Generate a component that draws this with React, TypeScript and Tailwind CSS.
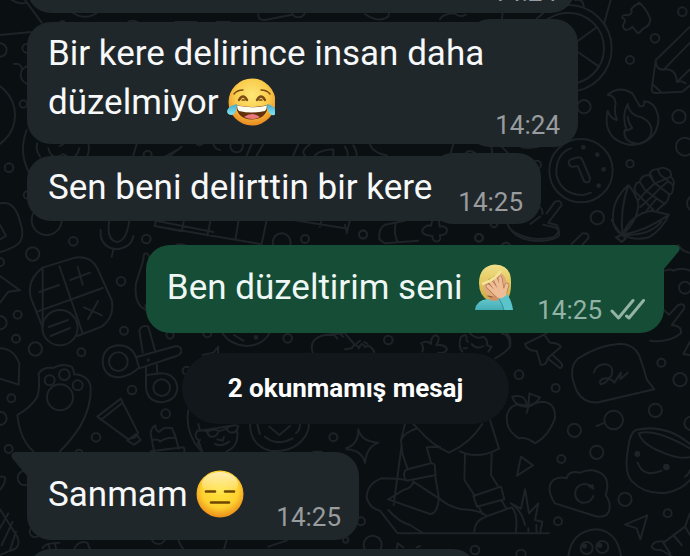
import React from "react";
import clsx from "clsx";

type Dot = [number, number, number];

const dotsTopLeft: Dot[] = [
  [0, 150, 20], [80, 145, 13], [27, 503, 13], [70, 312, 11], [82, 585, 11],
  [90, 225, 28], [710, 438, 19], [443, 464, 12], [895, 30, 22], [-60, 345, 105],
  [255, -12, 62], [140, 660, 45],
];

const dotsTopRight: Dot[] = [
  [1012, 35, 13], [930, 115, 13], [855, 180, 12], [717, 320, 20], [1002, 350, 20],
  [1020, 440, 27], [855, 491, 11], [757, 653, 20], [402, 713, 11], [54, 703, 12],
  [576, 494, 12], [1050, 610, 24], [670, 145, 130], [670, 145, 107], [708, 512, 95],
];

const dotsBottomLeft: Dot[] = [
  [220, 64, 13], [98, 102, 20], [439, 57, 13], [0, 127, 12], [363, 184, 13],
  [53, 284, 12], [0, 308, 20], [48, 356, 12], [106, 387, 20], [372, 332, 12],
  [244, 397, 12], [34, 535, 12], [0, 595, 20], [396, 510, 13], [497, 581, 13],
  [288, 652, 13], [26, 687, 12], [75, 774, 22], [845, 67, 27], [915, 57, 12],
  [863, 355, 13], [1000, 652, 12], [510, 345, 11], [622, 340, 12], [560, 452, 12],
  [180, 323, 53], [355, 425, 28], [485, 503, 25], [180, 532, 39], [149, 481, 15],
  [193, 464, 16], [233, 496, 15], [105, 935, 16], [237, 700, 11], [475, 950, 22],
];

const dotsBottomRight: Dot[] = [
  [402, 54, 12], [54, 44, 12], [1020, 203, 18], [130, 360, 13], [522, 464, 13],
  [632, 504, 12], [949, 428, 12], [1005, 479, 20], [931, 571, 20], [806, 600, 28],
  [688, 631, 20], [1038, 610, 20], [755, 697, 20], [649, 717, 12], [840, 838, 20],
  [968, 880, 12], [639, 904, 12], [48, 904, 12], [83, 974, 27], [528, 1003, 14],
  [390, 990, 13], [725, 984, 18], [772, 981, 18], [2, 960, 8], [447, 12, 10],
];

const Dots: React.FC<{ items: Dot[] }> = ({ items }) => (
  <>
    {items.map(([cx, cy, r]) => (
      <circle key={`${cx}-${cy}-${r}`} cx={cx} cy={cy} r={r} />
    ))}
  </>
);

const Wallpaper: React.FC = () => (
  <svg
    aria-hidden="true"
    className="absolute inset-0 h-full w-full"
    viewBox="0 0 2070 1668"
    preserveAspectRatio="xMinYMin slice"
    fill="none"
    stroke="#1d2326"
    strokeWidth="6"
    strokeLinecap="round"
    strokeLinejoin="round"
  >
    <g>
      <Dots items={dotsTopLeft} />
      <path d="M75 0 125 68M0 105 92 96M35 0Q60 15 80 8M42 192Q62 187 66 208M80 390Q55 455 86 515" />
      <path d="M775 42Q773 62 795 60L875 44M385 66Q400 58 415 68M525 66H590M650 66H690M180 66Q190 60 195 68" />
      <path d="M112 430Q105 450 120 470M265 430Q270 450 262 468M145 445Q155 485 190 462Q225 490 238 445M180 438 190 432M410 432 400 466M495 470 530 450M545 440 510 468M590 432Q600 440 608 430M640 432Q645 448 660 450M755 432 740 466M790 432 770 466M895 432 880 466M930 432Q900 455 915 466M1000 466V448Q960 450 945 466" />
      {/* umbrella */}
      <path d="M0 610Q45 600 60 665Q78 715 50 735Q30 748 0 756M0 675 18 708 0 718" />
    </g>

    <g transform="translate(1035 0)">
      <Dots items={dotsTopRight} />
      <path d="M700 122 752 84M690 150 762 200M797 0 777 72M690 0Q715 -5 716 20M60 42Q100 70 130 50L132 40M285 58Q290 42 330 40Q345 55 362 44M473 40 470 60" />
      {/* puzzle piece */}
      <path d="M882 8Q878 14 868 18L858 28Q866 40 848 46Q830 42 832 54Q845 58 838 68Q828 82 842 90Q858 88 862 80L878 100Q886 98 894 86Q916 78 916 56Q900 20 882 8Z" />
      {/* pencil */}
      <path d="M1035 80 932 181 920 268Q921 280 934 279L1012 275 1035 256M932 181Q932 210 956 209Q992 202 996 246Q1008 240 1022 250M956 209 1035 128M996 246 1035 208M922 252 950 278" />
      {/* flame */}
      <path d="M788 284Q825 255 862 280Q874 300 884 318Q900 322 898 304Q932 306 940 352Q942 405 895 428Q850 446 808 415Q776 385 788 332Q796 356 816 360Q806 335 812 310Q810 286 788 284Z" />
      <path d="M848 312Q828 350 846 392L862 384Q850 370 848 350M848 312Q852 345 890 352Q926 370 918 402Q912 424 880 432Q838 428 838 396Q838 386 846 392" />
      {/* clock */}
      <path d="M678 445Q632 460 634 525Q650 585 715 585L738 578M672 492Q668 482 678 478L700 472Q710 472 713 482L735 534Q736 548 724 547Q716 545 714 536L698 498 684 500Q674 500 672 492Z" />
      <g fill="#1d2326" stroke="none">
        <circle cx="715" cy="442" r="7" />
        <circle cx="757" cy="464" r="7" />
        <circle cx="776" cy="508" r="7" />
        <circle cx="761" cy="557" r="7" />
      </g>
      {/* corn */}
      <path d="M850 556Q800 600 804 660Q805 690 832 704Q880 660 880 610Q870 575 850 556ZM850 556Q825 625 832 704M832 704Q860 640 920 632L972 644Q950 690 912 712Q870 724 832 704ZM832 704Q900 695 972 644M816 712 832 704 842 716 830 726Z" />
      <path d="M870 575Q865 550 884 545Q890 525 912 525Q920 505 940 508Q952 498 968 508Q980 512 978 530Q992 545 984 560Q985 582 972 585Q970 608 950 618L935 632M884 545 900 570 935 595 960 612M912 525 930 550 972 582M940 508Q940 525 960 535L984 555M880 600 905 572 930 550 978 530M885 622 920 590 950 560 968 545M905 632 935 595M918 525 925 545M870 575 900 605 925 630" />
      {/* hand */}
      <path d="M585 622Q595 630 592 642M605 640 630 605Q648 598 650 615L610 668 635 675Q650 695 625 712Q570 725 525 705Q490 690 488 672M556 672 585 650" />
      <path d="M435 435Q445 450 440 462M470 440 490 460M530 442Q560 448 595 436M325 432 315 466M362 462Q368 445 392 460M0 440Q10 455 8 466M25 436Q35 450 35 466M75 434Q85 460 125 466" />
    </g>

    <g transform="translate(0 660)">
      <Dots items={dotsBottomLeft} />
      {/* microphone */}
      <path d="M328 0Q318 60 350 66Q380 64 388 0M302 30V48Q310 84 350 88Q395 82 400 48M340 90 335 110" />
      <path d="M468 0 464 18 545 34M468 2 640 36M464 18 780 72M552 0 545 34M632 0 622 46M716 0 706 60M800 0 785 72M880 0 1035 25M965 0 960 20" />
      <path d="M530 74Q545 70 556 76M438 100Q430 98 430 120L408 190Q400 250 436 270M438 100Q450 102 450 130" />
      {/* plane */}
      <path d="M0 168 60 211 25 215 0 248" />
      {/* calculator */}
      <path d="M128 143 225 113Q272 106 292 145L335 240Q345 290 305 320L232 348M128 322 92 232Q80 180 128 143ZM178 138 248 340M112 275 308 204M118 216 177 195M211 180 270 158M233 141 248 194M252 262 306 286M294 243 264 298M146 321 204 300M152 348 210 324" />
      {/* scissors */}
      <path d="M408 412Q395 376 355 376Q308 380 308 427Q312 472 360 472Q395 465 418 442M408 412 528 378Q545 378 544 396Q540 405 530 408L418 445ZM428 398 418 332Q425 312 445 320L466 395M438 440V500Q440 545 485 547Q532 540 532 500Q525 462 485 460L440 465M470 428 472 460M418 445 408 412" />
      <circle cx="445" cy="420" r="2" />
      <path d="M0 385Q40 385 58 430L56 494 0 476M436 256 440 275" />
      {/* paw */}
      <path d="M100 694Q60 660 52 585Q95 560 112 530Q120 505 116 460Q130 440 160 444Q185 428 215 440Q222 450 222 463Q265 465 272 500Q275 560 240 620Q210 665 180 694" />
      {/* paint tube */}
      <path d="M292 590 362 536 414 638Q410 658 382 656L292 590ZM302 600 368 548M382 662 408 642 422 660 402 674Z" />
      {/* birthday cake */}
      <path d="M462 694 452 640Q455 620 466 616Q465 630 478 636Q490 618 516 625L526 648 536 686M458 660Q475 655 480 665Q500 650 528 654M452 694 550 682Q556 685 552 696M565 570Q555 620 585 670L605 694" />
      <path d="M606 694 595 660Q580 650 592 632 610 628 620 634M595 612 600 632 690 618M600 660Q588 670 600 676M622 636Q636 625 656 632Q650 652 634 650Q624 648 622 636ZM680 625Q696 612 715 618Q712 638 695 638Q682 636 680 625ZM656 634 680 626M652 658 668 662 672 650M645 672Q665 682 688 665M712 635Q716 680 680 694" />
      <path d="M750 612Q750 675 810 692Q880 700 915 650Q928 630 926 612M772 612Q775 630 780 642M795 650Q830 680 878 655M808 620 838 645 870 618M900 612Q900 630 888 640" />
      <path d="M608 405 640 398 655 380 654 398M668 340Q690 375 740 378Q790 375 808 340M702 345 730 362M938 398Q925 355 975 345L1035 338M1000 342 1012 356M1018 340 1030 350" />
      <circle cx="768" cy="352" r="4" fill="#1d2326" />
      {/* party hat */}
      <path d="M0 770Q25 765 10 795L0 810M0 868 52 950Q65 985 30 992L0 1005M25 880 0 925M38 905 5 975M48 935 30 990M128 985Q130 970 178 968M145 972 150 988M165 970 168 988M222 988Q235 960 262 968L270 988M535 960Q540 975 550 988M680 960 672 988M805 980 860 962M940 695H965" />
    </g>

    <g transform="translate(1035 660)">
      <Dots items={dotsBottomRight} />
      <path d="M103 58Q100 25 120 14L180 2M103 58 120 70 220 62M152 10Q145 40 158 66M235 25Q225 40 245 45L262 48Q262 66 278 64Q290 60 284 46Q308 45 306 28Q300 16 284 20L282 0M235 25Q250 12 258 18L262 0M0 14 5 35M15 0 5 40" />
      <path d="M488 14Q505 50 550 60Q600 70 640 50Q648 30 630 22L595 14M680 72 712 40Q735 38 730 54L712 74M800 0Q815 30 832 44M950 5Q910 50 832 44M812 52 830 44 842 54 830 66ZM470 74Q485 62 495 74M1000 75Q1010 95 1035 98M960 152Q975 145 985 152Q1010 140 1035 152" />
      {/* hand at the edge */}
      <path d="M957 270 972 284 1000 255Q1020 248 1018 265L980 315Q1012 318 1008 340Q970 370 915 362" />
      <path d="M0 340 30 375M0 388 20 385Q30 365 42 385Q50 360 60 382Q75 370 88 396M35 370 45 362M58 366 68 372M232 395Q238 378 228 370Q245 360 258 372Q258 345 275 346Q288 352 274 376Q300 372 306 388Q300 402 280 398M352 395Q338 380 348 350L362 345M365 350Q362 365 370 365M356 385 366 385M375 340Q395 360 415 350Q430 360 425 375 435 380 440 380L430 395M380 372Q395 390 415 378M470 340Q495 345 495 380Q480 400 450 415M485 340Q500 350 495 380" />
      {/* push pin */}
      <path d="M605 340 540 372Q545 392 575 393L588 435Q605 435 608 415L648 380Q640 368 615 368L598 345M608 415 645 445Q658 440 645 425L622 404" />
      {/* speech balloon */}
      <path d="M700 415Q760 375 825 371Q865 372 882 405Q895 440 905 478L928 508 760 547Q715 550 695 512Q665 445 700 415ZM746 458Q755 430 785 433Q808 440 800 465Q780 495 766 492Q760 480 780 475Q800 475 808 488L828 458 826 478 848 458" />
      {/* apple */}
      <path d="M548 560Q500 540 486 585Q480 630 522 655Q545 650 570 670Q610 650 630 595Q632 545 590 545Q565 548 548 560ZM545 578 550 560M545 560Q510 560 502 530Q545 520 545 560ZM550 560 553 520 585 532Q570 555 550 560" />
      <path d="M755 618 780 608" />
      {/* star */}
      <path d="M40 628Q48 665 100 668Q65 680 60 728Q50 690 4 688M4 684Q40 675 40 628" />
      {/* walking person */}
      <path d="M180 612 168 660 172 700 188 748M170 675 146 855M168 660Q180 635 218 625L205 612M218 625Q260 675 312 698Q375 670 412 612M435 600 462 686Q400 720 345 694M360 705 358 780 390 828M440 702 438 765 460 800M245 682 258 728M285 680 245 682M188 748 258 730Q272 728 270 748L272 765 185 782Q172 770 180 752ZM270 765 282 835Q275 885 255 882L130 838M190 782Q160 775 110 775Q65 790 65 835Q75 865 105 872Q130 905 158 940H612M130 870Q160 905 195 915L235 940M205 785Q200 805 175 810L130 838M205 785 282 835Q310 860 350 868 400 870 422 885M385 828 468 800 478 838 396 860ZM400 858 412 882M470 842 484 865M388 940Q385 905 422 890L500 862Q520 880 512 940" />
      {/* grass */}
      <path d="M540 915Q530 870 498 850L528 866 540 808 552 880 580 850 570 900 592 905 585 940M550 940V925M575 940 574 915" />
      <path d="M528 710 564 736 516 767Z" />
      {/* cloud */}
      <path d="M630 850Q600 805 625 780Q645 768 665 775Q670 750 705 758Q745 740 775 765Q795 785 782 825Q805 860 785 885Q765 895 740 885ZM742 800Q715 782 694 805Q682 835 710 848Q738 850 745 828M732 798 745 806 742 795" />
      {/* cup */}
      <path d="M850 680Q856 638 872 630Q960 610 1035 672M882 640Q890 675 960 700Q1005 718 1035 712M882 640Q930 625 1035 685M850 680Q835 760 862 785Q900 825 965 818Q1010 810 1035 780M878 728Q895 775 950 752M1020 770Q1030 765 1035 750" />
      <g fill="#1d2326" stroke="none">
        <circle cx="877" cy="702" r="9" />
        <circle cx="964" cy="741" r="10" />
        <circle cx="718" cy="978" r="8" />
        <circle cx="764" cy="976" r="8" />
      </g>
      <path d="M907 886 840 914 875 925 886 958Z" />
      <path d="M670 1008Q680 935 750 928Q815 930 828 1008M1035 880 1020 920 960 965Q925 960 920 980 925 992 948 990L980 1008M955 968 975 1000M985 945 1010 975M1020 920 1035 945M1035 365 1015 402 1035 405M155 985 158 970 175 982M215 982 225 978" />
    </g>
  </svg>
);

const JoyEmoji: React.FC = () => (
  <svg role="img" aria-label="😂" viewBox="0 0 48 48" className="inline-block h-12 w-12 align-[-12px]">
    <defs>
      <radialGradient id="joyFace" cx="50%" cy="36%" r="64%">
        <stop offset="0" stopColor="#fde777" />
        <stop offset=".55" stopColor="#f9cc4c" />
        <stop offset="1" stopColor="#e98a1f" />
      </radialGradient>
      <linearGradient id="joyTear" x1="0" y1="0" x2="0" y2="1">
        <stop offset="0" stopColor="#4aa9c8" />
        <stop offset="1" stopColor="#7ee6f5" />
      </linearGradient>
    </defs>
    <circle cx="25" cy="24" r="23.5" fill="url(#joyFace)" />
    <g fill="none" stroke="#7a4a14" strokeLinecap="round">
      <path d="M7 16Q10 12 16 12M34 12Q40 12 43 16" strokeWidth="1.4" />
      <path d="M12 22Q16 15 20 22M30 22Q34 15 38 22" strokeWidth="2.4" />
      <path d="M15 22H18M32 22H35" strokeWidth="1.3" />
    </g>
    <path d="M9 27Q25 31 41 27Q40 41 25 41.5Q10 41 9 27Z" fill="#61300d" />
    <path d="M10 27.5Q25 31 40 27.5Q40 31 38 33Q25 36 12 33Q10 31 10 27.5Z" fill="#fffdf1" />
    <path d="M17 39Q25 33 33 39Q25 43 17 39Z" fill="#e9787a" />
    <path d="M10 26Q1 28 0 33Q0 37 5 37Q10 35 10 26Z" fill="url(#joyTear)" />
    <path d="M40 26Q48 28 49 33Q49 38 45 37Q40 35 40 26Z" fill="url(#joyTear)" />
  </svg>
);

const FacepalmEmoji: React.FC = () => (
  <svg role="img" aria-label="🤦🏼‍♀️" viewBox="0 0 48 48" className="inline-block h-12 w-12 align-[-12px]">
    <defs>
      <linearGradient id="palmHair" x1="0" y1="0" x2="0" y2="1">
        <stop offset="0" stopColor="#f0e08a" />
        <stop offset=".5" stopColor="#e3c75d" />
        <stop offset="1" stopColor="#c9a548" />
      </linearGradient>
      <linearGradient id="palmShirt" x1="0" y1="0" x2="0" y2="1">
        <stop offset="0" stopColor="#62c6cb" />
        <stop offset="1" stopColor="#45acb5" />
      </linearGradient>
    </defs>
    <path d="M8 20Q8 3 24 1.5Q41 2 40 21Q40 31 37 35L32 38H18Q8 33 8 20Z" fill="url(#palmHair)" />
    <path d="M13 21Q24 17 30 10Q36 14 36 23Q35 33 25 37Q13 34 13 21Z" fill="#e0aa7d" />
    <path d="M18 33H29V39H18Z" fill="#cf9265" />
    <path d="M4 47Q5 37 17 36Q23 40 30 36L38 40 42 47Z" fill="url(#palmShirt)" />
    <path d="M16 22 19 20M17 33 21 34" fill="none" stroke="#8d5731" strokeWidth="1.2" strokeLinecap="round" />
    {/* fingers first, the palm and sleeve over them */}
    <g strokeLinecap="round" fill="none">
      <path d="M17 23 25 31M19 18 27 29M24 15 29 27M29 15 31 27M36 22 33 31" stroke="#ad744c" strokeWidth="4.6" />
      <path d="M17 23 25 31M19 18 27 29M24 15 29 27M29 15 31 27M36 22 33 31" stroke="#eebd95" strokeWidth="3.4" />
    </g>
    <path d="M25 27Q30 23 35 27L36 34Q31 38 26 34Q22 31 25 27Z" fill="#eebd95" />
    <path d="M27 35Q33 36 36 31Q41 38 42 47H33Q32 40 27 35Z" fill="#5bc3ca" />
    <path d="M28 36Q31 40 33 47" fill="none" stroke="#31909a" strokeWidth="1" />
    <path d="M11 21Q24 17 30 8" fill="none" stroke="#f2e495" strokeWidth="2.6" />
  </svg>
);

const ExpressionlessEmoji: React.FC = () => (
  <svg role="img" aria-label="😑" viewBox="0 0 48 48" className="inline-block h-12 w-12 align-[-12px]">
    <defs>
      <radialGradient id="flatFace" cx="50%" cy="40%" r="60%">
        <stop offset="0" stopColor="#ffe53c" />
        <stop offset=".65" stopColor="#fdd130" />
        <stop offset="1" stopColor="#ed8d19" />
      </radialGradient>
      <linearGradient id="flatShine" x1="0" y1="0" x2="0" y2="1">
        <stop offset="0" stopColor="#fff2c8" stopOpacity=".85" />
        <stop offset="1" stopColor="#fff2c8" stopOpacity="0" />
      </linearGradient>
    </defs>
    <circle cx="24" cy="24" r="23.5" fill="url(#flatFace)" />
    <ellipse cx="24" cy="14" rx="18" ry="12" fill="url(#flatShine)" />
    <path d="M10 21.5H19M29 21.5H38M15 32.5H33" stroke="#6d4605" strokeWidth="2.6" strokeLinecap="round" />
  </svg>
);

const DoubleCheck: React.FC = () => (
  <svg
    role="img"
    aria-label="İletildi"
    viewBox="0 0 36 24"
    className="h-6 w-9"
    fill="none"
    stroke="#93b3a5"
    strokeWidth="3"
    strokeLinecap="round"
    strokeLinejoin="round"
  >
    <path d="M2 13 8.5 20 23 2.500M16.500 18 19 20 33.500 2.500" />
  </svg>
);

interface BubbleProps {
  children?: React.ReactNode;
  time: string;
  own?: boolean;
  tail?: boolean;
  lobe?: boolean;
  className?: string;
  textClassName?: string;
}

const Bubble: React.FC<BubbleProps> = ({
  children,
  time,
  own = false,
  tail = false,
  lobe = false,
  className,
  textClassName,
}) => (
  <article
    className={clsx(
      "relative flex items-end justify-between rounded-[24px]",
      own
        ? "self-end bg-[#154d37] text-[#eef7f3]"
        : "self-start bg-[#20272a] text-[#f6f8f9]",
      tail && own && "rounded-tr-none",
      tail && !own && "rounded-tl-none",
      className,
    )}
  >
    {tail && (
      <svg
        aria-hidden="true"
        viewBox="0 0 16 24"
        className={clsx(
          "absolute top-0 h-6 w-4",
          own ? "left-full fill-[#154d37]" : "right-full -scale-x-100 fill-[#20272a]",
        )}
      >
        <path d="M0 0H12Q17 1 15 6L0 24Z" />
      </svg>
    )}
    {lobe && (
      <span className="absolute -inset-y-[3px] right-0 w-28 rounded-[24px] bg-[#20272a]" />
    )}
    <p className={clsx("relative text-[35px] leading-[49px]", textClassName)}>{children}</p>
    <div
      className={clsx(
        "relative flex shrink-0 items-center gap-2 text-[26px] leading-[30px]",
        own ? "text-[#93b3a5]" : "text-[#989c9e]",
        tail ? "pb-2" : "pb-1",
      )}
    >
      <time>{time}</time>
      {own && <DoubleCheck />}
    </div>
  </article>
);

const App: React.FC = () => {
  return (
    <div className="relative min-h-screen w-full overflow-hidden bg-[#0a0f12] font-[Roboto,sans-serif]">
      <Wallpaper />
      <main className="relative flex h-screen flex-col pl-[27px] pr-[26px]">
        {/* previous message, scrolled almost out of view */}
        <Bubble
          time="14:24"
          className="-mt-[60px] h-[73px] w-[548px] shrink-0 pr-[18px] pb-0.5"
          textClassName="pt-[7px]"
        />
        <Bubble
          time="14:24"
          lobe
          className="mt-[9px] w-[551px] pl-[21px] pr-[18px]"
          textClassName="pt-[7px] pb-[17px]"
        >
          Bir kere delirince insan daha
          <br />
          düzelmiyor <JoyEmoji />
        </Bubble>
        <Bubble
          time="14:25"
          lobe
          className="mt-3 gap-[26px] pl-[21px] pr-[18px]"
          textClassName="pt-[7px] pb-[9px]"
        >
          Sen beni delirttin bir kere
        </Bubble>
        <Bubble
          time="14:25"
          own
          tail
          className="mt-6 gap-[18px] pl-[21px] pr-[18px]"
          textClassName="pt-[18px] pb-[21px]"
        >
          Ben düzeltirim seni <FacepalmEmoji />
        </Bubble>
        <div className="mt-5 self-center rounded-full bg-[#12171b] px-[46px] py-5 text-[26px] leading-[31px] font-bold text-white">
          2 okunmamış mesaj
        </div>
        <Bubble
          time="14:25"
          tail
          className="mt-7 gap-8 pl-[21px] pr-[18px]"
          textClassName="pt-[18px] pb-[21px]"
        >
          Sanmam <ExpressionlessEmoji />
        </Bubble>
        {/* next message, only its top edge is in view */}
        <div className="mt-[9px] h-20 w-[450px] shrink-0 rounded-[24px] bg-[#20272a]" />
      </main>
    </div>
  );
};

export default App;
